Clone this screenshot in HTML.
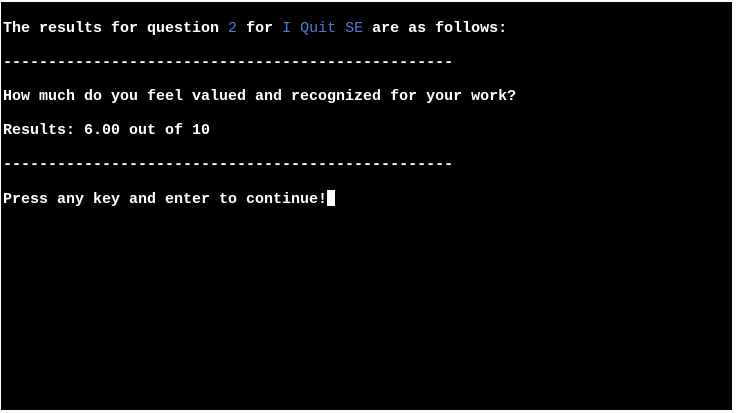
<!DOCTYPE html>
<html><head><style>
html,body{margin:0;padding:0;background:#fff;width:737px;height:413px;overflow:hidden}
#t{position:absolute;left:1px;top:2px;width:731px;height:408px;background:#000}
pre{margin:0;position:absolute;left:2px;top:18px;font:bold 15px/17px "Liberation Mono",monospace;color:#fff}
.b{color:#4a7fd8;font-weight:normal}
.c{display:inline-block;width:8px;height:16px;background:#fff;vertical-align:-3px}
</style></head><body><div id="t"><pre>The results for question <span class="b">2</span> for <span class="b">I Quit SE</span> are as follows:

--------------------------------------------------

How much do you feel valued and recognized for your work?

Results: 6.00 out of 10

--------------------------------------------------

Press any key and enter to continue!<span class="c"></span></pre></div></body></html>
